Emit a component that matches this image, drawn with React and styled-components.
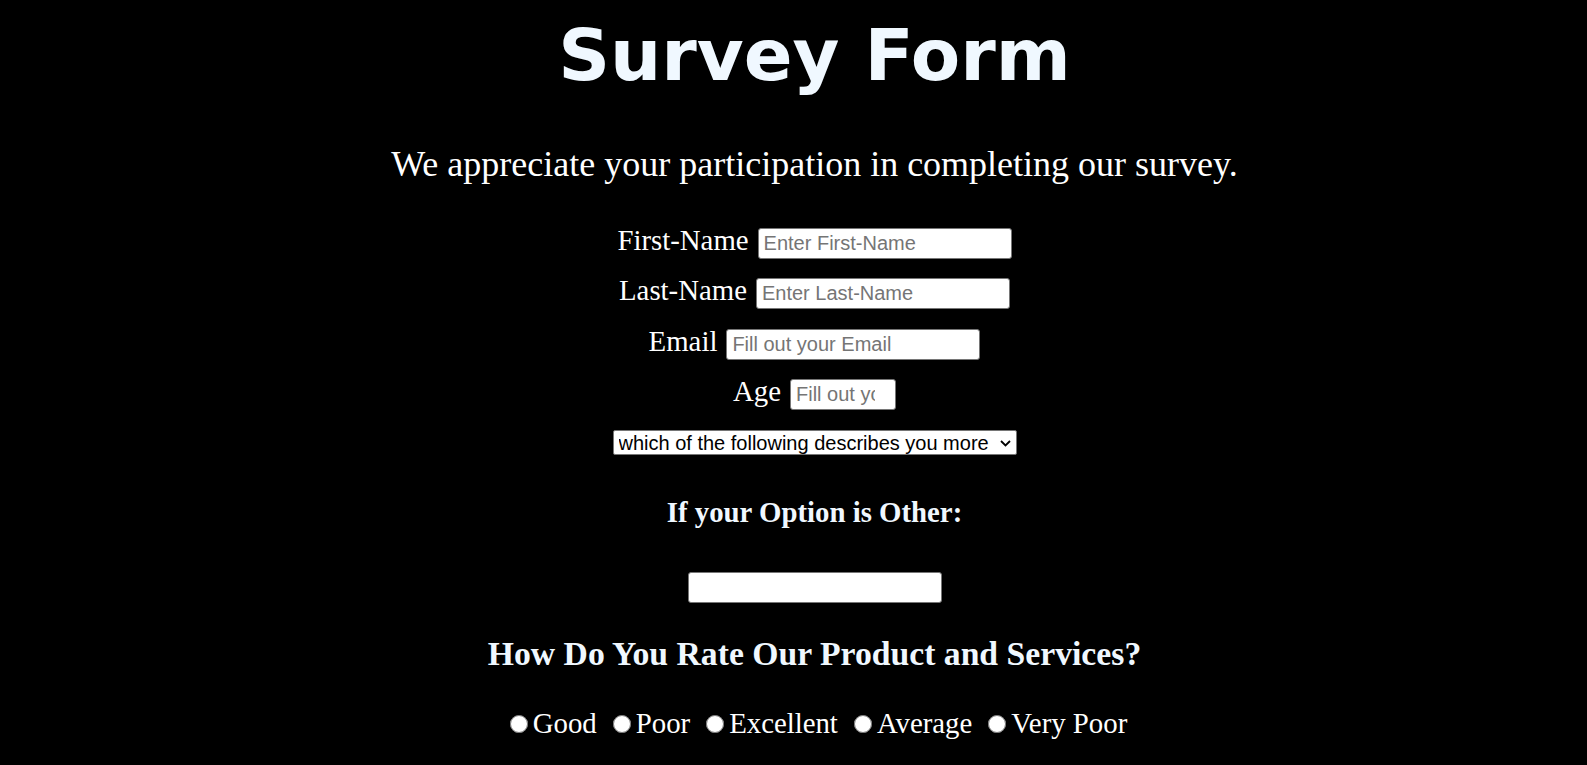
import React from "react";
import styled, { createGlobalStyle } from "styled-components";

const GlobalStyle = createGlobalStyle`
  html, body {
    margin: 0;
    padding: 0;
    background-color: #000;
  }
  body {
    font-family: "Liberation Serif", "Times New Roman", serif;
    color: #fff;
  }
`;

const Page = styled.div`
  display: flex;
  flex-direction: column;
  align-items: center;
  text-align: center;
  padding: 15px 0 0 42px;
`;

const Title = styled.h1`
  margin: 0;
  font-family: "DejaVu Sans", Verdana, sans-serif;
  font-weight: bold;
  font-size: 72px;
  line-height: 80px;
  color: aliceblue;
`;

const Description = styled.p`
  margin: 47px 0 0;
  font-size: 36px;
  line-height: 44px;
  color: #fff;
`;

const Form = styled.form`
  display: flex;
  flex-direction: column;
  align-items: center;
  margin-top: 38px;
`;

const Row = styled.div`
  display: flex;
  align-items: baseline;
  justify-content: center;
  gap: 9px;
  height: 50.3px;
`;

const Label = styled.label`
  font-size: 28.8px;
  color: #fff;
`;

const TextInput = styled.input`
  box-sizing: border-box;
  width: ${(p) => p.$width || 254}px;
  height: 31px;
  padding: 1px 5px;
  border: 1px solid #767676;
  border-radius: 3px;
  background: #fff;
  font-family: "Liberation Sans", Arial, sans-serif;
  font-size: 20px;
  color: #000;
  &::placeholder {
    color: #757575;
  }
  &:focus {
    outline: none;
  }
`;

const SelectWrap = styled.div`
  position: relative;
  margin-top: 5px;
  line-height: 0;
`;

const Dropdown = styled.select`
  box-sizing: border-box;
  appearance: none;
  width: 404px;
  height: 25px;
  padding: 0 24px 0 5px;
  border: 1px solid #767676;
  border-radius: 2px;
  background: #fff;
  font-family: "Liberation Sans", Arial, sans-serif;
  font-size: 20px;
  color: #000;
  &:focus {
    outline: none;
  }
`;

const Chevron = styled.svg`
  position: absolute;
  right: 6px;
  top: 10px;
  pointer-events: none;
`;

const SubHeading = styled.h3`
  margin: 39px 0 0;
  font-size: 28.8px;
  line-height: 36px;
  font-weight: bold;
  color: aliceblue;
`;

const OtherRow = styled.div`
  margin-top: 42px;
  line-height: 0;
`;

const RateHeading = styled.h2`
  margin: 31px 0 0;
  font-size: 33.7px;
  line-height: 40px;
  font-weight: bold;
  color: aliceblue;
`;

const RadioGroup = styled.div`
  display: flex;
  align-items: baseline;
  justify-content: center;
  gap: 16px;
  margin-top: 33px;
  padding-left: 8px;
  font-size: 28.8px;
  line-height: 32px;
`;

const RadioOption = styled.label`
  display: flex;
  align-items: baseline;
  color: #fff;
`;

const Radio = styled.input`
  width: 18px;
  height: 18px;
  margin: 0 5px 0 0;
`;

const ratings = ["Good", "Poor", "Excellent", "Average", "Very Poor"];

const App = () => {
  return (
    <>
      <GlobalStyle />
      <Page>
        <Title>Survey Form</Title>
        <Description>
          We appreciate your participation in completing our survey.
        </Description>
        <Form onSubmit={(e) => e.preventDefault()}>
          <Row>
            <Label htmlFor="first">First-Name</Label>
            <TextInput id="first" type="text" placeholder="Enter First-Name" />
          </Row>
          <Row>
            <Label htmlFor="last">Last-Name</Label>
            <TextInput id="last" type="text" placeholder="Enter Last-Name" />
          </Row>
          <Row>
            <Label htmlFor="email">Email</Label>
            <TextInput id="email" type="email" placeholder="Fill out your Email" />
          </Row>
          <Row>
            <Label htmlFor="age">Age</Label>
            <TextInput id="age" type="number" $width={106} placeholder="Fill out your Age" />
          </Row>
          <SelectWrap>
            <Dropdown defaultValue="">
              <option value="" disabled>
                which of the following describes you more
              </option>
              <option>Student</option>
              <option>Professional</option>
              <option>Other</option>
            </Dropdown>
            <Chevron width="11" height="7" viewBox="0 0 11 7">
              <polyline
                points="1,1 5.5,5.5 10,1"
                fill="none"
                stroke="#000"
                strokeWidth="1.8"
              />
            </Chevron>
          </SelectWrap>
          <SubHeading>If your Option is Other:</SubHeading>
          <OtherRow>
            <TextInput type="text" />
          </OtherRow>
          <RateHeading>How Do You Rate Our Product and Services?</RateHeading>
          <RadioGroup>
            {ratings.map((r) => (
              <RadioOption key={r}>
                <Radio type="radio" name="rating" value={r} />
                {r}
              </RadioOption>
            ))}
          </RadioGroup>
        </Form>
      </Page>
    </>
  );
};

export default App;
